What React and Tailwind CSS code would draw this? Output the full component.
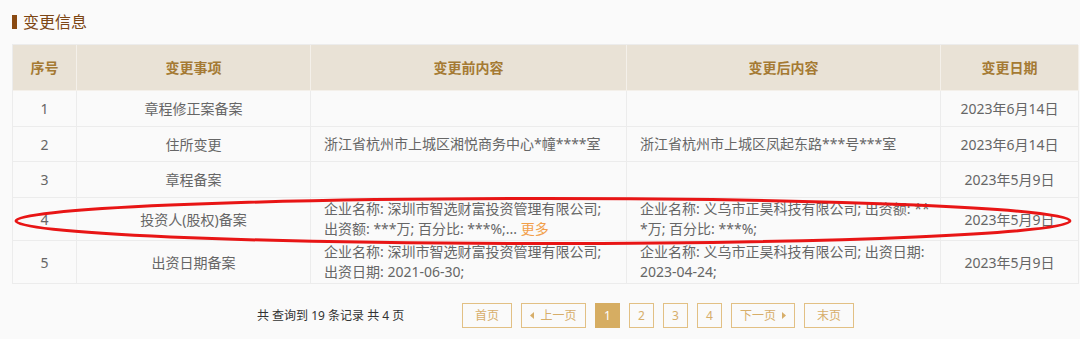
import React from "react";

const font = { fontFamily: '"Noto Sans", "Noto Sans CJK SC", sans-serif' };

const rows = [
  { h: "h-[36px]", no: "1", item: "章程修正案备案", before: null, after: null, date: "2023年6月14日" },
  { h: "h-[35px]", no: "2", item: "住所变更", before: ["浙江省杭州市上城区湘悦商务中心*幢****室"], after: ["浙江省杭州市上城区凤起东路***号***室"], date: "2023年6月14日" },
  { h: "h-[36px]", no: "3", item: "章程备案", before: null, after: null, date: "2023年5月9日" },
  { h: "h-[43px]", no: "4", item: "投资人(股权)备案", before: ["企业名称: 深圳市智选财富投资管理有限公司;", "出资额: ***万; 百分比: ***%;..."], more: true, after: ["企业名称: 义乌市正昊科技有限公司; 出资额: **", "*万; 百分比: ***%;"], date: "2023年5月9日" },
  { h: "h-[43px]", no: "5", item: "出资日期备案", before: ["企业名称: 深圳市智选财富投资管理有限公司;", "出资日期: 2021-06-30;"], after: ["企业名称: 义乌市正昊科技有限公司; 出资日期:", "2023-04-24;"], date: "2023年5月9日" },
];

function Cell({ children, center, className = "" }) {
  return (
    <div className={`border-r border-b border-[#ececec] flex items-center ${center ? "justify-center" : "justify-start pl-[13px]"} ${className}`}>
      {children}
    </div>
  );
}

function Lines({ lines, more }) {
  if (!lines) return null;
  return (
    <div className="leading-[20px] whitespace-nowrap">
      {lines.map((l, i) => (
        <div key={i}>
          {l}
          {more && i === lines.length - 1 ? <span className="text-[#f2a04a]"> 更多</span> : null}
        </div>
      ))}
    </div>
  );
}

function Btn({ children, active, w }) {
  return (
    <div
      className={`h-[25px] ${w} flex items-center justify-center text-[12px] border ${
        active ? "bg-[#d6ad62] border-[#d6ad62] text-white" : "border-[#e2c084] text-[#d7ae6a]"
      }`}
    >
      {children}
    </div>
  );
}

export default function App() {
  return (
    <div className="relative w-[1080px] h-[339px] bg-[#fafafa] overflow-hidden" style={font}>
      <div className="pl-[12px] pt-[12px] h-[32px] flex items-center gap-[6px]">
        <div className="w-[5px] h-[14px] bg-[#8a4a12]" />
        <div className="text-[16px] leading-[20px] text-[#7d4614]">变更信息</div>
      </div>

      <div className="mt-[12px] ml-[12px] w-[1066px] border-l border-t border-[#ececec] grid grid-cols-[64px_234px_316px_314px_138px] text-[14px] text-[#666]">
        {["序号", "变更事项", "变更前内容", "变更后内容", "变更日期"].map((t) => (
          <div key={t} className="h-[46px] bg-[#e9e2d6] border-r border-b border-[#f4f0ea] flex items-center justify-center font-bold text-[#a57a33]">
            {t}
          </div>
        ))}
        {rows.map((r) => (
          <React.Fragment key={r.no}>
            <Cell center className={r.h}>{r.no}</Cell>
            <Cell center className={r.h}>{r.item}</Cell>
            <Cell className={r.h}><Lines lines={r.before} more={r.more} /></Cell>
            <Cell className={r.h}><Lines lines={r.after} /></Cell>
            <Cell center className={r.h}>{r.date}</Cell>
          </React.Fragment>
        ))}
      </div>

      <div className="mt-[19px] pl-[257px] flex items-center">
        <div className="text-[12px] text-[#333] w-[205px] whitespace-nowrap">共 查询到 19 条记录 共 4 页</div>
        <div className="flex items-center gap-[9px]">
          <Btn w="w-[50px]">首页</Btn>
          <Btn w="w-[65px]">
            <svg width="5" height="7" viewBox="0 0 5 7" className="mr-[5px]"><polygon points="4,0 4,7 0,3.5" fill="#d7ae6a" /></svg>
            上一页
          </Btn>
          <Btn w="w-[25px]" active>1</Btn>
          <Btn w="w-[25px]">2</Btn>
          <Btn w="w-[25px]">3</Btn>
          <Btn w="w-[25px]">4</Btn>
          <Btn w="w-[64px]">
            下一页
            <svg width="5" height="7" viewBox="0 0 5 7" className="ml-[5px]"><polygon points="1,0 1,7 5,3.5" fill="#d7ae6a" /></svg>
          </Btn>
          <Btn w="w-[50px]">末页</Btn>
        </div>
      </div>

      <svg className="absolute left-0 top-0 pointer-events-none" width="1080" height="339">
        <ellipse cx="543" cy="221" rx="527" ry="22.5" fill="none" stroke="#e81515" strokeWidth="3" />
      </svg>
    </div>
  );
}
